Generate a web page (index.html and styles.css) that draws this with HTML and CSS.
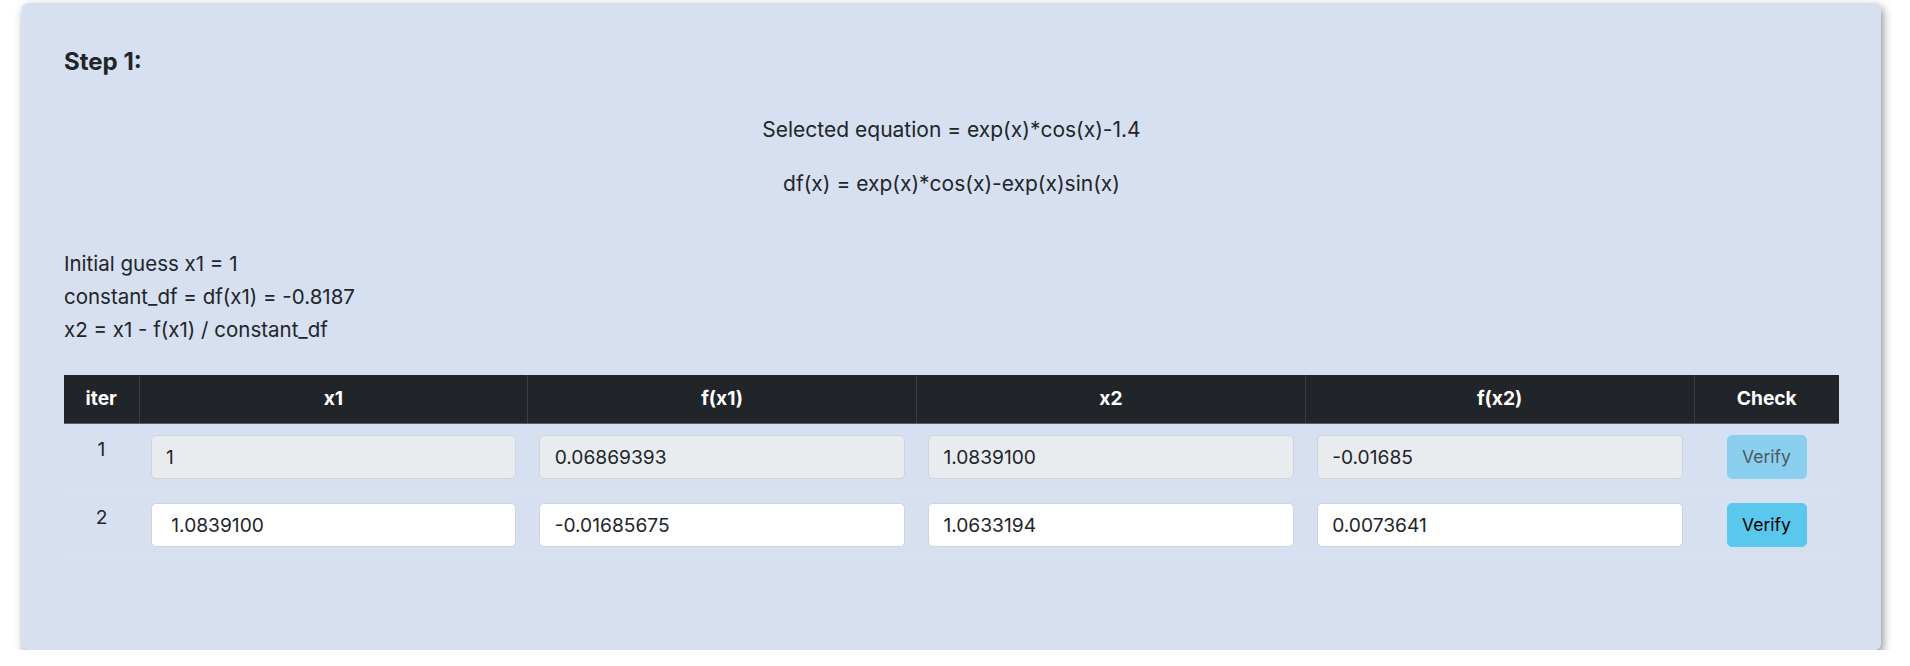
FILE: index.html
```html
<!DOCTYPE html>
<html lang="en">
<head>
<meta charset="utf-8">
<title>Step 1</title>
<link rel="stylesheet" href="styles.css">
</head>
<body>
<div class="card">
  <h5 class="title">Step 1:</h5>
  <div class="equations">
    <p class="eq">Selected equation = exp(x)*cos(x)-1.4</p>
    <p class="eq">df(x) = exp(x)*cos(x)-exp(x)sin(x)</p>
  </div>
  <div class="guess">
    <div class="line">Initial guess x1 = 1</div>
    <div class="line">constant_df = df(x1) = -0.8187</div>
    <div class="line">x2 = x1 - f(x1) / constant_df</div>
  </div>
  <table class="iter-table">
    <colgroup>
      <col class="c-iter">
      <col class="c-val">
      <col class="c-val">
      <col class="c-val">
      <col class="c-val">
      <col class="c-check">
    </colgroup>
    <thead>
      <tr>
        <th>iter</th>
        <th>x1</th>
        <th>f(x1)</th>
        <th>x2</th>
        <th>f(x2)</th>
        <th>Check</th>
      </tr>
    </thead>
    <tbody>
      <tr>
        <td class="num">1</td>
        <td><input class="inp" type="text" value="1" disabled></td>
        <td><input class="inp" type="text" value="0.06869393" disabled></td>
        <td><input class="inp" type="text" value="1.0839100" disabled></td>
        <td><input class="inp" type="text" value="-0.01685" disabled></td>
        <td class="chk"><button class="btn" disabled>Verify</button></td>
      </tr>
      <tr>
        <td class="num">2</td>
        <td><input class="inp" type="text" value=" 1.0839100"></td>
        <td><input class="inp" type="text" value="-0.01685675"></td>
        <td><input class="inp" type="text" value="1.0633194"></td>
        <td><input class="inp" type="text" value="0.0073641"></td>
        <td class="chk"><button class="btn">Verify</button></td>
      </tr>
    </tbody>
  </table>
</div>
</body>
</html>
```

FILE: styles.css
```css
html, body {
  margin: 0;
  padding: 0;
  background: #ffffff;
}

body {
  font-family: Inter, "Noto Sans", "Liberation Sans", sans-serif;
  font-size: 19.2px;
  line-height: 28.8px;
  color: #212529;
}

.card {
  margin: 3px 29px 0 22px;
  background: #d7e0f0;
  border-radius: 6px;
  box-shadow: 2px 4px 10px rgba(0, 0, 0, 0.45);
  padding: 44.5px 42px 90px 42px;
}

.title {
  margin: 0;
  font-size: 24px;
  line-height: 28.8px;
  font-weight: 700;
}

.equations {
  margin-top: 40px;
  text-align: center;
  font-size: 21px;
}

.eq {
  margin: 0 0 24.7px 0;
}

.eq:last-child {
  margin-bottom: 0;
}

.guess {
  margin-top: 48.7px;
  font-size: 20.5px;
}

.guess .line {
  line-height: 33px;
}

.iter-table {
  margin-top: 28.5px;
  width: 100%;
  border-collapse: collapse;
  table-layout: fixed;
}

.c-iter { width: 75px; }
.c-check { width: 145px; }

.iter-table th {
  background: #212529;
  color: #ffffff;
  font-weight: 700;
  text-align: center;
  padding: 9.6px 8px;
  border-left: 1px solid #3a3f45;
  border-bottom: 1px solid #5b6066;
}

.iter-table th:first-child {
  border-left: none;
}

.iter-table td {
  padding: 11.5px;
  vertical-align: top;
  border-bottom: 1px solid #dde3ea;
}

.iter-table td.num {
  text-align: center;
  padding-left: 0;
  padding-right: 0;
}

.iter-table td.chk {
  text-align: center;
}

.inp {
  display: block;
  box-sizing: border-box;
  width: 100%;
  height: 44px;
  margin: 0;
  padding: 0 14.4px;
  border: 1px solid #ced4da;
  border-radius: 5px;
  background: #ffffff;
  color: #212529;
  font-family: inherit;
  font-size: 19.2px;
  line-height: 28.8px;
}

.inp:disabled {
  background: #e9ecef;
  color: #212529;
  -webkit-text-fill-color: #212529;
  opacity: 1;
}

.btn {
  box-sizing: border-box;
  width: 80px;
  height: 44px;
  margin: 0;
  padding: 0;
  border: 1px solid #5ac8ec;
  border-radius: 5px;
  background: #5ac8ec;
  color: #000000;
  font-family: inherit;
  font-size: 17.5px;
  line-height: 28.8px;
  cursor: pointer;
}

.btn:disabled {
  background: #8ad0ee;
  border-color: #8ad0ee;
  color: #4c5862;
  cursor: default;
}
```
